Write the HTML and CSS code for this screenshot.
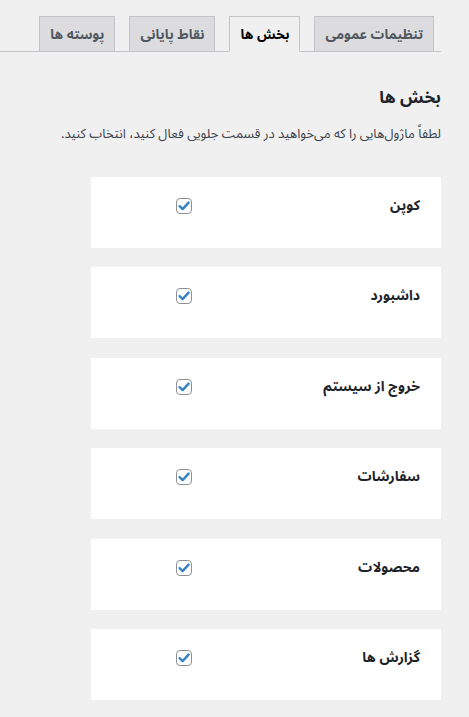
FILE: index.html
```html
<!DOCTYPE html>
<html lang="fa" dir="rtl">
<head>
<meta charset="utf-8">
<title>بخش ها</title>
<link rel="stylesheet" href="styles.css">
</head>
<body>
<div class="wrap">
  <nav class="tabs">
    <a class="tab">تنظیمات عمومی</a>
    <a class="tab active">بخش ها</a>
    <a class="tab">نقاط پایانی</a>
    <a class="tab">پوسته ها</a>
  </nav>
  <h2 class="title">بخش ها</h2>
  <p class="desc">لطفاً ماژول‌هایی را که می‌خواهید در قسمت جلویی فعال کنید، انتخاب کنید.</p>
  <div class="cards">
    <div class="card"><span class="label">کوپن</span><span class="check"><svg viewBox="0 0 16 16" width="16" height="16"><rect x="0.5" y="0.5" width="15" height="15" rx="3.5" fill="#fff" stroke="#8c8f94"/><path d="M3.6 8.2 L6.6 11.1 L12.6 4.6" fill="none" stroke="#3582c4" stroke-width="2.4" stroke-linecap="round" stroke-linejoin="round"/></svg></span></div>
    <div class="card"><span class="label">داشبورد</span><span class="check"><svg viewBox="0 0 16 16" width="16" height="16"><rect x="0.5" y="0.5" width="15" height="15" rx="3.5" fill="#fff" stroke="#8c8f94"/><path d="M3.6 8.2 L6.6 11.1 L12.6 4.6" fill="none" stroke="#3582c4" stroke-width="2.4" stroke-linecap="round" stroke-linejoin="round"/></svg></span></div>
    <div class="card"><span class="label">خروج از سیستم</span><span class="check"><svg viewBox="0 0 16 16" width="16" height="16"><rect x="0.5" y="0.5" width="15" height="15" rx="3.5" fill="#fff" stroke="#8c8f94"/><path d="M3.6 8.2 L6.6 11.1 L12.6 4.6" fill="none" stroke="#3582c4" stroke-width="2.4" stroke-linecap="round" stroke-linejoin="round"/></svg></span></div>
    <div class="card"><span class="label">سفارشات</span><span class="check"><svg viewBox="0 0 16 16" width="16" height="16"><rect x="0.5" y="0.5" width="15" height="15" rx="3.5" fill="#fff" stroke="#8c8f94"/><path d="M3.6 8.2 L6.6 11.1 L12.6 4.6" fill="none" stroke="#3582c4" stroke-width="2.4" stroke-linecap="round" stroke-linejoin="round"/></svg></span></div>
    <div class="card"><span class="label">محصولات</span><span class="check"><svg viewBox="0 0 16 16" width="16" height="16"><rect x="0.5" y="0.5" width="15" height="15" rx="3.5" fill="#fff" stroke="#8c8f94"/><path d="M3.6 8.2 L6.6 11.1 L12.6 4.6" fill="none" stroke="#3582c4" stroke-width="2.4" stroke-linecap="round" stroke-linejoin="round"/></svg></span></div>
    <div class="card"><span class="label">گزارش ها</span><span class="check"><svg viewBox="0 0 16 16" width="16" height="16"><rect x="0.5" y="0.5" width="15" height="15" rx="3.5" fill="#fff" stroke="#8c8f94"/><path d="M3.6 8.2 L6.6 11.1 L12.6 4.6" fill="none" stroke="#3582c4" stroke-width="2.4" stroke-linecap="round" stroke-linejoin="round"/></svg></span></div>
  </div>
</div>
</body>
</html>
```
FILE: styles.css
```css
* { box-sizing: border-box; }
html, body {
  margin: 0;
  padding: 0;
  background: #f0f0f1;
}
body {
  direction: rtl;
  font-family: "Noto Sans Arabic", "DejaVu Sans", sans-serif;
  color: #1d2327;
}
.wrap {
  margin-right: 28px;
  margin-left: 0;
}
.tabs {
  display: flex;
  gap: 14px;
  padding: 13px 7px 0 0;
  border-bottom: 1px solid #c3c4c7;
  height: 52px;
  align-items: flex-end;
}
.tab {
  display: flex;
  align-items: center;
  justify-content: center;
  height: 36px;
  margin-bottom: -1px;
  padding: 0 10px;
  background: #dcdcde;
  border: 1px solid #c3c4c7;
  color: #50575e;
  font-size: 13.5px;
  font-weight: 700;
  white-space: nowrap;
}
.tab.active {
  background: #f0f0f1;
  border-bottom-color: #f0f0f1;
  color: #000;
}
.title {
  margin: 35px 0 0;
  font-size: 17px;
  font-weight: 700;
  line-height: 22px;
  color: #1d2327;
}
.desc {
  margin: 16px 0 0;
  font-size: 13px;
  line-height: 18px;
  color: #3c434a;
}
.cards {
  margin: 34px 0 0 0;
  width: 350px;
  display: flex;
  flex-direction: column;
  gap: 19.4px;
}
.card {
  background: #fff;
  height: 71px;
  padding: 21px 21px 0;
  display: flex;
  align-items: flex-start;
}
.label {
  width: 228px;
  font-size: 14px;
  font-weight: 700;
  line-height: 16px;
  color: #1d2327;
}
.check {
  display: block;
  width: 16px;
  height: 16px;
}
.check svg { display: block; }
```
